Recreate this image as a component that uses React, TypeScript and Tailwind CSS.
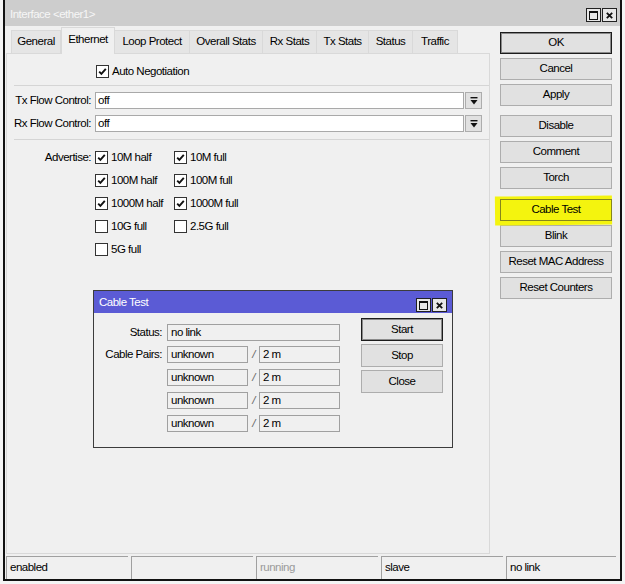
import type { ReactNode } from 'react'

const FONT = "font-['Liberation_Sans',Arial,sans-serif]"

const tabs: [string, number][] = [
  ['General', 50],
  ['Ethernet', 54],
  ['Loop Protect', 75],
  ['Overall Stats', 73],
  ['Rx Stats', 54],
  ['Tx Stats', 52],
  ['Status', 44],
  ['Traffic', 45],
]

const advertise: [string, boolean, string | null, boolean][] = [
  ['10M half', true, '10M full', true],
  ['100M half', true, '100M full', true],
  ['1000M half', true, '1000M full', true],
  ['10G full', false, '2.5G full', false],
  ['5G full', false, null, false],
]

function Check({ checked, label }: { checked?: boolean; label: string }) {
  return (
    <div className="flex h-[13px] items-center gap-[3px] whitespace-nowrap">
      <span className="flex h-[13px] w-[13px] shrink-0 items-center justify-center border border-[#333] bg-white">
        {checked && (
          <svg viewBox="0 0 11 11" className="h-[11px] w-[11px]">
            <path d="M2.2 5.6 4.4 7.9 8.8 2.8" fill="none" stroke="#111" strokeWidth="1.9" />
          </svg>
        )}
      </span>
      <span>{label}</span>
    </div>
  )
}

function Btn({ children, primary, className = '' }: { children: ReactNode; primary?: boolean; className?: string }) {
  return (
    <div
      className={`flex items-center justify-center border ${
        primary ? 'border-[#1c1c1c] shadow-[inset_0_0_0_1px_#8a8a8a]' : 'border-[#adadad]'
      } ${className}`}
    >
      {children}
    </div>
  )
}

function CloseGlyph() {
  return (
    <svg viewBox="0 0 10 10" className="h-[9px] w-[9px]">
      <path d="M2 2 8 8M8 2 2 8" stroke="#111" strokeWidth="2" />
    </svg>
  )
}

function WinButtons() {
  return (
    <div className="flex gap-[1px]">
      <div className="flex h-[14px] w-[15px] items-center justify-center border border-[#222] bg-[#e8e8e8]">
        <span className="h-[9px] w-[9px] border border-t-2 border-[#111]" />
      </div>
      <div className="flex h-[14px] w-[15px] items-center justify-center border border-[#222] bg-[#e8e8e8]">
        <CloseGlyph />
      </div>
    </div>
  )
}

function DropButton() {
  return (
    <div className="ml-[1px] flex h-[17px] w-[17px] items-center justify-center border border-[#adadad] bg-[#e1e1e1]">
      <svg viewBox="0 0 8 8" className="h-[8px] w-[8px]">
        <rect x="0.5" y="0" width="7" height="1.4" fill="#111" />
        <path d="M0.5 3h7L4 7.5z" fill="#111" />
      </svg>
    </div>
  )
}

function FlowRow({ label, className = '' }: { label: string; className?: string }) {
  return (
    <div className={`flex h-[17px] items-center ${className}`}>
      <span className="w-[84px] whitespace-nowrap text-right">{label}</span>
      <div className="ml-[4px] flex h-[17px] w-[369px] items-center border border-[#a9a9a9] bg-white pl-[2px]">off</div>
      <DropButton />
    </div>
  )
}

function LeftPane() {
  return (
    <div className="flex w-[485px] flex-col">
      <div className="flex h-[27px] items-end pl-[6px]">
        {tabs.map(([name, w]) =>
          name === 'Ethernet' ? (
            <div
              key={name}
              style={{ width: w }}
              className="relative z-10 -mb-px flex h-[27px] items-center justify-center border border-b-0 border-[#d9d9d9] bg-[#f0f0f0] pb-[2px]"
            >
              {name}
            </div>
          ) : (
            <div
              key={name}
              style={{ width: w }}
              className="flex h-[23px] items-center justify-center border border-b-0 border-l-0 border-[#d9d9d9] bg-[#e5e5e5] first:border-l"
            >
              {name}
            </div>
          ),
        )}
      </div>
      <div className="ml-px flex h-[501px] w-[484px] flex-col border border-[#d9d9d9] bg-[#f0f0f0]">
        <div className="mt-[11px] pl-[89px]">
          <Check checked label="Auto Negotiation" />
        </div>
        <div className="ml-[7px] mt-[7px] h-px bg-[#d5d5d5]" />
        <FlowRow label="Tx Flow Control:" className="mt-[6px]" />
        <FlowRow label="Rx Flow Control:" className="mt-[6px]" />
        <div className="ml-[7px] mt-[7px] h-px bg-[#d5d5d5]" />
        <div className="mt-[11px] flex flex-col gap-[10px]">
          {advertise.map(([a, ac, b, bc], i) => (
            <div key={a} className="flex h-[13px] items-center">
              <span className="w-[84px] text-right">{i === 0 ? 'Advertise:' : ''}</span>
              <div className="ml-[4px] w-[79px]">
                <Check checked={ac} label={a} />
              </div>
              {b && <Check checked={bc} label={b} />}
            </div>
          ))}
        </div>
      </div>
    </div>
  )
}

function RightButtons() {
  return (
    <div className="ml-[10px] flex w-[112px] flex-col pt-[6px]">
      <Btn primary className="h-[22px] bg-[#e1e1e1]">OK</Btn>
      <Btn className="mt-[4px] h-[22px] bg-[#e1e1e1]">Cancel</Btn>
      <Btn className="mt-[4px] h-[22px] bg-[#e1e1e1]">Apply</Btn>
      <Btn className="mt-[9px] h-[22px] bg-[#e1e1e1]">Disable</Btn>
      <Btn className="mt-[4px] h-[22px] bg-[#e1e1e1]">Comment</Btn>
      <Btn className="mt-[4px] h-[22px] bg-[#e1e1e1]">Torch</Btn>
      <div className="relative mt-[10px]">
        {/* marker highlight drawn over the screenshot */}
        <span className="absolute -left-[5px] -top-[3px] h-[29px] w-[117px] -rotate-[0.6deg] bg-[#f4f40e]" />
        <div className="relative flex h-[22px] items-center justify-center border border-[#86861c] bg-[#f4f40e]">
          Cable Test
        </div>
      </div>
      <Btn className="mt-[4px] h-[22px] bg-[#e1e1e1]">Blink</Btn>
      <Btn className="mt-[4px] h-[22px] bg-[#e1e1e1]">Reset MAC Address</Btn>
      <Btn className="mt-[4px] h-[22px] bg-[#e1e1e1]">Reset Counters</Btn>
    </div>
  )
}

function StatusBar() {
  const cells: [string, string, number][] = [
    ['enabled', 'text-black', 122],
    ['', 'text-black', 122],
    ['running', 'text-[#9b9b9b]', 122],
    ['slave', 'text-black', 122],
    ['no link', 'text-black', 110],
  ]
  return (
    <div className="mt-[2px] flex h-[23px] gap-[3px] pl-px">
      {cells.map(([t, c, w], i) => (
        <div key={i} style={{ width: w }} className={`flex items-center border-l border-t border-[#a0a0a0] pl-[3px] ${c}`}>
          {t}
        </div>
      ))}
    </div>
  )
}

function Field({ children, w }: { children: ReactNode; w: string }) {
  return <div className={`flex h-[17px] items-center border border-[#a0a0a0] bg-[#f0f0f0] pl-[3px] ${w}`}>{children}</div>
}

function PairRow({ label, className = '' }: { label: string; className?: string }) {
  return (
    <div className={`flex h-[17px] items-center ${className}`}>
      <span className="w-[68px] whitespace-nowrap text-right">{label}</span>
      <div className="ml-[5px] flex items-center">
        <Field w="w-[81px]">unknown</Field>
        <span className="w-[11px] text-center italic text-[#666]">/</span>
        <Field w="w-[81px]">2 m</Field>
      </div>
    </div>
  )
}

function CableTestDialog() {
  return (
    <div className="absolute left-[93px] top-[290px] flex h-[158px] w-[360px] flex-col border border-[#3c3c3c] bg-[#f0f0f0]">
      <div className="flex h-[22px] bg-[#5b5bd5]">
        <span className="self-center pl-[5px] pt-[1px] text-white">Cable Test</span>
        <div className="ml-auto mr-[5px] self-end pb-[1px]">
          <WinButtons />
        </div>
      </div>
      <div className="flex">
        <div className="mt-[11px] flex flex-col">
          <div className="flex h-[17px] items-center">
            <span className="w-[68px] text-right">Status:</span>
            <div className="ml-[5px]">
              <Field w="w-[173px]">no link</Field>
            </div>
          </div>
          <PairRow label="Cable Pairs:" className="mt-[5px]" />
          <PairRow label="" className="mt-[6px]" />
          <PairRow label="" className="mt-[6px]" />
          <PairRow label="" className="mt-[6px]" />
        </div>
        <div className="ml-[21px] mt-[5px] flex w-[82px] flex-col gap-[3px]">
          <Btn primary className="h-[23px] bg-[#e1e1e1]">Start</Btn>
          <Btn className="h-[23px] bg-[#e1e1e1]">Stop</Btn>
          <Btn className="h-[23px] bg-[#e1e1e1]">Close</Btn>
        </div>
      </div>
    </div>
  )
}

export default function App() {
  return (
    <div
      className={`relative h-[584px] w-[625px] overflow-hidden bg-[#f4f4f4] text-[11.5px] leading-none tracking-[-0.5px] text-black ${FONT}`}
    >
      <div className="ml-[3px] flex h-[581px] w-[619px] flex-col border-x-2 border-b-2 border-[#111] bg-[#f0f0f0]">
        <div className="flex h-[26px] shrink-0 items-center bg-[#cdcdcd] pl-[5px] pr-[3px] pt-[4px]">
          <span className="text-[#f6f6f6]">{'Interface <ether1>'}</span>
          <div className="ml-auto">
            <WinButtons />
          </div>
        </div>
        <div className="flex h-[528px] shrink-0">
          <LeftPane />
          <RightButtons />
        </div>
        <StatusBar />
      </div>
      <CableTestDialog />
    </div>
  )
}
